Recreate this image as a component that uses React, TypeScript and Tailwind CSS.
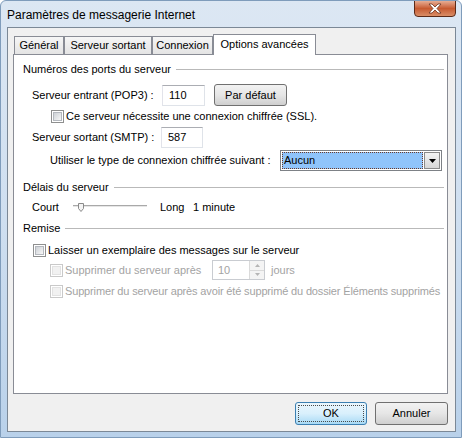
import { JSX } from 'react';

function Checkbox({ disabled = false }: { disabled?: boolean }): JSX.Element {
  return (
    <span
      className={
        disabled
          ? 'w-[13px] h-[13px] shrink-0 border border-[#c9c9c9] bg-white flex items-center justify-center'
          : 'w-[13px] h-[13px] shrink-0 border border-[#8e8f8f] bg-white flex items-center justify-center'
      }
    >
      <span
        className={
          disabled
            ? 'w-[9px] h-[9px] border border-[#e2e2e2] bg-[#f1f1f1]'
            : 'w-[9px] h-[9px] border border-[#b4b8be] bg-gradient-to-br from-[#cdd1d6] to-[#f7f7f7]'
        }
      />
    </span>
  );
}

function GroupHeader({ label, className = '' }: { label: string; className?: string }): JSX.Element {
  return (
    <div className={`flex items-center h-[14px] pl-[9px] pr-[3px] ${className}`}>
      <span>{label}</span>
      <span className="flex-1 h-px bg-[#b9b9b9] ml-[5px]" />
    </div>
  );
}

function TextBox({ value, className = '' }: { value: string; className?: string }): JSX.Element {
  return (
    <div
      className={`h-[21px] flex items-center pl-[6px] bg-white border border-[#dfe3e9] border-t-[#abadb3] border-l-[#e2e3ea] ${className}`}
    >
      {value}
    </div>
  );
}

function Tab({ label, width }: { label: string; width: string }): JSX.Element {
  return (
    <div
      className={`${width} h-[18px] flex items-center justify-center border border-b-0 border-[#898c95] bg-gradient-to-b from-[#f6f6f6] to-[#e4e4e4]`}
    >
      {label}
    </div>
  );
}

export default function App(): JSX.Element {
  return (
    <div className="w-[462px] h-[438px] flex flex-col bg-gradient-to-b from-[#dce7f3] via-[#cfdff0] to-[#b9d1ea] border border-[#7f9cbb] rounded-t-[6px] font-['Liberation_Sans',Arial,sans-serif] text-[11px] text-black overflow-hidden">
      {/* title bar */}
      <div className="h-[26px] flex items-start justify-between pl-[6px] pr-[5px]">
        <span className="text-[12px] mt-[5px]">Paramètres de messagerie Internet</span>
        <div className="w-[42px] h-[17px] -mt-px rounded-b-[4px] border border-[#5b2a18] bg-gradient-to-b from-[#e6ad93] via-[#c65a30] to-[#d98d66] flex items-center justify-center">
          <svg width="14" height="11" viewBox="0 0 14 11">
            <path
              d="M1 1 L5 5.5 L1 10 L4 10 L7 7 L10 10 L13 10 L9 5.5 L13 1 L10 1 L7 4 L4 1 Z"
              fill="#ffffff"
              stroke="#6b3420"
              strokeWidth="0.8"
            />
          </svg>
        </div>
      </div>

      {/* client area */}
      <div className="ml-[6px] mr-[5px] h-[405px] bg-[#f0f0f0] border border-[#7b8896] flex flex-col pt-[6px] pb-[6px]">
        {/* tabs */}
        <div className="ml-[6px] h-[20px] flex items-end">
          <Tab label="Général" width="w-[50px]" />
          <Tab label="Serveur sortant" width="w-[88px]" />
          <Tab label="Connexion" width="w-[61px]" />
          <div className="w-[103px] h-[21px] -mb-px relative z-10 flex items-center justify-center pb-[2px] bg-white border border-b-0 border-[#898c95]">
            Options avancées
          </div>
        </div>

        {/* panel */}
        <div className="ml-[5px] w-[435px] h-[340px] bg-white border border-[#898c95] flex flex-col">
          <GroupHeader label="Numéros des ports du serveur" className="mt-[7px]" />

          <div className="mt-[8px] h-[22px] flex items-center pl-[18px]">
            <span className="w-[130px]">Serveur entrant (POP3) :</span>
            <TextBox value="110" className="w-[43px]" />
            <div className="ml-[9px] w-[73px] h-[22px] flex items-center justify-center rounded-[3px] border border-[#707070] bg-gradient-to-b from-[#f2f2f2] via-[#e6e6e6] to-[#cfcfcf]">
              Par défaut
            </div>
          </div>

          <div className="mt-[3px] h-[14px] flex items-center pl-[37px]">
            <Checkbox />
            <span className="ml-[2px]">Ce serveur nécessite une connexion chiffrée (SSL).</span>
          </div>

          <div className="mt-[4px] h-[21px] flex items-center pl-[18px]">
            <span className="w-[129px]">Serveur sortant (SMTP) :</span>
            <TextBox value="587" className="w-[42px]" />
          </div>

          <div className="mt-[2px] h-[21px] flex items-center pl-[36px]">
            <span className="w-[230px]">Utiliser le type de connexion chiffrée suivant :</span>
            <div className="w-[162px] h-[21px] flex items-stretch border border-[#7d8186] bg-white p-px">
              <span className="flex-1 flex items-center pl-px bg-[#8fc4fb] border border-dotted border-[#6a3b2c]">
                Aucun
              </span>
              <span className="w-[16px] ml-px flex items-center justify-center border border-[#8a8a8a] bg-gradient-to-b from-[#f3f3f3] to-[#d6d6d6]">
                <svg width="7" height="4" viewBox="0 0 7 4">
                  <path d="M0 0 H7 L3.5 4 Z" fill="#000" />
                </svg>
              </span>
            </div>
          </div>

          <GroupHeader label="Délais du serveur" className="mt-[9px]" />

          <div className="mt-[6px] h-[14px] flex items-center pl-[18px]">
            <span className="w-[41px]">Court</span>
            <svg width="74" height="12" viewBox="0 0 74 12" className="shrink-0">
              <rect x="0" y="4" width="74" height="1" fill="#a9a9a9" />
              <rect x="0" y="5" width="74" height="1" fill="#e6e6e6" />
              <path d="M5.5 2.5 H10.5 V7.5 L8 10.5 L5.5 7.5 Z" fill="#f4f4f4" stroke="#8a8a8a" />
            </svg>
            <span className="ml-[13px] w-[33px]">Long</span>
            <span>1 minute</span>
          </div>

          <GroupHeader label="Remise" className="mt-[7px]" />

          <div className="mt-[8px] h-[14px] flex items-center pl-[19px]">
            <Checkbox />
            <span className="ml-[2px]">Laisser un exemplaire des messages sur le serveur</span>
          </div>

          <div className="mt-[3px] h-[20px] flex items-center pl-[36px] text-[#a3a3a3]">
            <Checkbox disabled />
            <span className="ml-[2px] w-[147px]">Supprimer du serveur après</span>
            <div className="w-[53px] h-[20px] flex border border-[#c9ccd1] bg-white">
              <span className="flex-1 flex items-center pl-[5px]">10</span>
              <span className="w-[15px] flex flex-col border-l border-[#dadada]">
                <span className="flex-1 flex items-center justify-center border-b border-[#dadada] bg-[#f4f4f4]">
                  <svg width="5" height="3" viewBox="0 0 5 3">
                    <path d="M0 3 H5 L2.5 0 Z" fill="#b5b5b5" />
                  </svg>
                </span>
                <span className="flex-1 flex items-center justify-center bg-[#f4f4f4]">
                  <svg width="5" height="3" viewBox="0 0 5 3">
                    <path d="M0 0 H5 L2.5 3 Z" fill="#b5b5b5" />
                  </svg>
                </span>
              </span>
            </div>
            <span className="ml-[6px]">jours</span>
          </div>

          <div className="mt-[4px] h-[14px] flex items-center pl-[36px] text-[#a3a3a3]">
            <Checkbox disabled />
            <span className="ml-[2px] whitespace-nowrap tracking-[-0.15px]">
              Supprimer du serveur après avoir été supprimé du dossier Éléments supprimés
            </span>
          </div>
        </div>

        {/* dialog buttons */}
        <div className="ml-[5px] w-[435px] mt-[8px] h-[23px] flex justify-end gap-[8px]">
          <div className="w-[72px] h-[23px] rounded-[3px] border border-[#3c7fb1] bg-gradient-to-b from-[#eaf6fd] via-[#d9f0fc] to-[#a7d9f5] p-[2px]">
            <div className="w-full h-full flex items-center justify-center border border-dotted border-[#4a4a4a]">OK</div>
          </div>
          <div className="w-[73px] h-[23px] rounded-[3px] border border-[#707070] bg-gradient-to-b from-[#f2f2f2] via-[#e6e6e6] to-[#cfcfcf] flex items-center justify-center">
            Annuler
          </div>
        </div>
      </div>
    </div>
  );
}
